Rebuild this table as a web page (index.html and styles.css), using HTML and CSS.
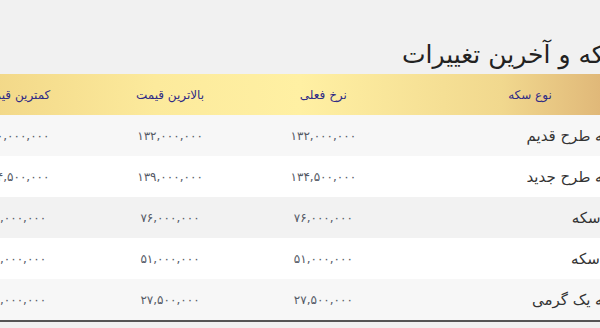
FILE: index.html
```html
<!DOCTYPE html>
<html lang="fa">
<head>
<meta charset="utf-8">
<link rel="stylesheet" href="styles.css">
</head>
<body>
<div class="page">
  <section class="board" dir="rtl">
    <h2 class="title">قیمت سکه و آخرین تغییرات</h2>
    <table class="prices">
      <thead>
        <tr>
          <th class="c-name">نوع سکه</th>
          <th class="c-num">نرخ فعلی</th>
          <th class="c-num">بالاترین قیمت</th>
          <th class="c-num">کمترین قیمت</th>
        </tr>
      </thead>
      <tbody>
        <tr class="odd">
          <td class="c-name">سکه طرح قدیم</td>
          <td class="c-num">۱۳۲,۰۰۰,۰۰۰</td>
          <td class="c-num">۱۳۲,۰۰۰,۰۰۰</td>
          <td class="c-num">۱۳۰,۰۰۰,۰۰۰</td>
        </tr>
        <tr>
          <td class="c-name">سکه طرح جدید</td>
          <td class="c-num">۱۳۴,۵۰۰,۰۰۰</td>
          <td class="c-num">۱۳۹,۰۰۰,۰۰۰</td>
          <td class="c-num">۱۳۴,۵۰۰,۰۰۰</td>
        </tr>
        <tr class="hover">
          <td class="c-name">نیم سکه</td>
          <td class="c-num">۷۶,۰۰۰,۰۰۰</td>
          <td class="c-num">۷۶,۰۰۰,۰۰۰</td>
          <td class="c-num">۷۴,۰۰۰,۰۰۰</td>
        </tr>
        <tr>
          <td class="c-name">ربع سکه</td>
          <td class="c-num">۵۱,۰۰۰,۰۰۰</td>
          <td class="c-num">۵۱,۰۰۰,۰۰۰</td>
          <td class="c-num">۵۰,۰۰۰,۰۰۰</td>
        </tr>
        <tr class="odd">
          <td class="c-name">سکه یک گرمی</td>
          <td class="c-num">۲۷,۵۰۰,۰۰۰</td>
          <td class="c-num">۲۷,۵۰۰,۰۰۰</td>
          <td class="c-num">۲۷,۰۰۰,۰۰۰</td>
        </tr>
      </tbody>
    </table>
  </section>
</div>
</body>
</html>
```
FILE: styles.css
```css
html, body {
  margin: 0;
  padding: 0;
  background: #f1f1f1;
  overflow: hidden;
}
body {
  font-family: "DejaVu Sans", sans-serif;
}
.page {
  width: 600px;
  display: flex;
  justify-content: center;
}
.board {
  flex: none;
  width: 720px;
  padding-top: 39px;
}
.title {
  margin: 0 -33px 3px 0;
  font-size: 25px;
  line-height: 32px;
  font-weight: normal;
  color: #222;
}
.prices {
  width: 720px;
  border-collapse: collapse;
  table-layout: fixed;
  border-bottom: 2px solid #555;
}
.prices thead tr {
  background: linear-gradient(to left, #d6a56c 0%, #f1d88e 22%, #fff0a3 50%, #fcea9c 70%, #efd282 100%);
}
.prices th {
  height: 41px;
  padding: 0;
  font-size: 12px;
  font-weight: normal;
  color: #2f2a86;
  text-align: center;
}
.prices td {
  height: 41px;
  padding: 0;
  font-size: 12px;
  color: #555a66;
  text-align: center;
}
.prices th.c-name { width: 260px; }
.prices td.c-name {
  text-align: right;
  padding-right: 36px;
  color: #333;
  font-size: 15px;
}
.prices tbody tr { background: #fff; }
.prices tbody tr.odd { background: #f7f7f7; }
.prices tbody tr.hover { background: #f2f2f2; }
```
